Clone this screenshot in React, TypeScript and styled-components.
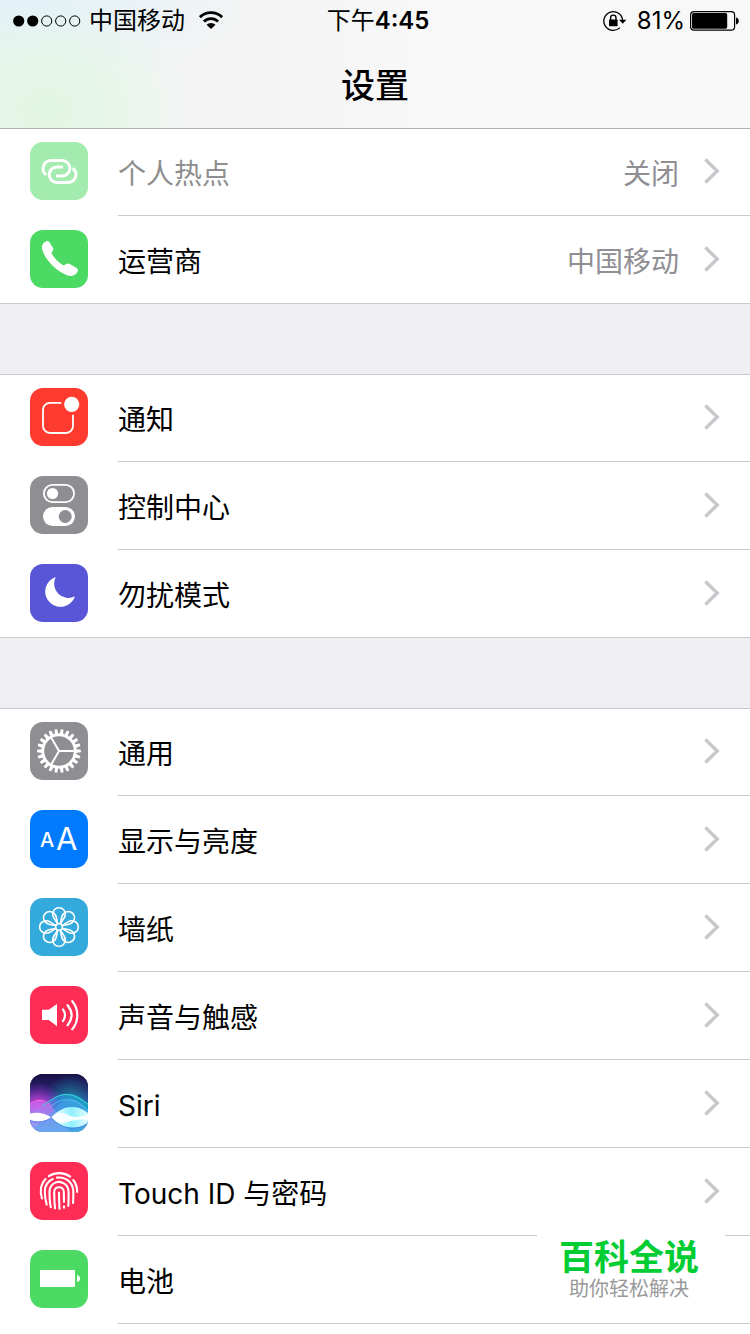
import React from "react";
import styled, { createGlobalStyle } from "styled-components";

const GlobalStyle = createGlobalStyle`
  *, *::before, *::after { box-sizing: border-box; }
  body {
    margin: 0;
    background: #efeff4;
    color: #000;
    font-family: Inter, "Noto Sans CJK SC", sans-serif;
  }
`;

const Page = styled.div`
  display: flex;
  flex-direction: column;
  min-height: 100vh;
`;

const Header = styled.header`
  position: sticky;
  top: 0;
  z-index: 1;
  background:
    radial-gradient(ellipse 150px 120px at 50px 110px, rgba(225, 247, 228, 0.9) 0%, rgba(225, 247, 228, 0.6) 40%, rgba(225, 247, 228, 0.15) 80%, rgba(225, 247, 228, 0) 100%),
    radial-gradient(ellipse 240px 90px at 20px 0, rgba(227, 241, 250, 1) 0%, rgba(227, 241, 250, 0.3) 65%, rgba(227, 241, 250, 0) 100%),
    linear-gradient(90deg, #ecf5ee 0, #f3f4f4 160px, #f4f4f4 270px, #f8f8f8 420px);
  box-shadow: 0 1px 0 #b2b2b2;
`;

const StatusBar = styled.div`
  display: grid;
  grid-template-columns: 1fr auto 1fr;
  align-items: center;
  height: 42px;
  padding: 0 11px 0 13px;
  font-size: 24px;
  line-height: 42px;
`;

const StatusSide = styled.div<{ $end?: boolean }>`
  display: flex;
  align-items: center;
  justify-content: ${(p) => (p.$end ? "flex-end" : "flex-start")};
`;

const Carrier = styled.span`
  margin: 0 14px 0 8px;
`;

const Time = styled.time`
  padding-left: 4px;

  b { font-weight: 600; }
`;

const Percent = styled.span`
  margin: 0 5px 0 10px;
`;

const Title = styled.h1`
  margin: 0;
  padding-top: 2px;
  font-size: 34px;
  line-height: 84px;
  font-weight: 500;
  text-align: center;
`;

const Main = styled.main`
  display: flex;
  flex-direction: column;
  flex: 1;
  gap: 70px;
`;

const Group = styled.ul<{ $open?: boolean }>`
  margin: 0;
  padding: 0;
  list-style: none;
  background: #fff;
  flex: ${(p) => (p.$open ? 1 : "none")};
  box-shadow: inset 0 1px 0 #c8c7cc${(p) => (p.$open ? "" : ", inset 0 -1px 0 #c8c7cc")};
`;

const RowLink = styled.a`
  display: flex;
  height: 88px;
  padding-left: 30px;
  color: inherit;
  text-decoration: none;
`;

const Tile = styled.span<{ $color: string; $faded?: boolean }>`
  flex: none;
  width: 58px;
  height: 58px;
  margin: 14px 30px 16px 0;
  border-radius: 13px;
  overflow: hidden;
  background: ${(p) => p.$color};
  opacity: ${(p) => (p.$faded ? 0.5 : 1)};

  svg { display: block; }
`;

const RowBody = styled.span`
  display: flex;
  flex: 1;
  align-items: center;
  padding: 0 30px 2px 0;
  border-bottom: 1px solid #c8c7cc;
  font-size: 28px;
  line-height: 40px;
`;

const Label = styled.span<{ $faded?: boolean }>`
  flex: 1;
  padding-top: 6px;
  color: ${(p) => (p.$faded ? "#8e8e8e" : "#000")};
`;

const Value = styled.span`
  padding-top: 6px;
  margin-right: 25px;
  color: #8e8e93;
`;

const Badge = styled.aside`
  position: fixed;
  right: 25px;
  bottom: 24px;
  z-index: 2;
  width: 188px;
  padding: 11px 4px 11px 0;
  background: #fff;
  text-align: center;
`;

const BadgeName = styled.strong`
  display: block;
  font-size: 35px;
  line-height: 44px;
  font-weight: 700;
  color: #00cc33;
`;

const BadgeLine = styled.span`
  display: block;
  font-size: 20px;
  line-height: 20px;
  color: #999;
`;

const SignalDots = () => (
  <svg width="68" height="12" viewBox="0 0 68 12" aria-hidden="true">
    {[0, 1, 2, 3, 4].map((i) => (
      <circle
        key={i}
        cx={5.7 + i * 14}
        cy={6}
        r={i < 2 ? 5.6 : 5.1}
        fill={i < 2 ? "#000" : "none"}
        stroke={i < 2 ? "none" : "#000"}
        strokeWidth={1}
      />
    ))}
  </svg>
);

const Wifi = () => (
  <svg width="24" height="20" viewBox="0 0 24 20" fill="none" stroke="#000" strokeWidth="2.8" aria-hidden="true">
    <path d="M.9 6.2a15.8 15.8 0 0 1 22.2 0" />
    <path d="M4.9 10.6a10 10 0 0 1 14.2 0" />
    <path d="M12 18 7.5 13.8a6.3 6.3 0 0 1 9 0Z" fill="#000" stroke="none" />
  </svg>
);

const RotationLock = () => (
  <svg width="24" height="22" viewBox="0 0 24 22" fill="none" stroke="#000" aria-hidden="true">
    <path d="M16.9 17.6a9.4 9.4 0 1 1 2.7-7.1" strokeWidth="1.3" />
    <path d="M16 9.8h7.4l-3.7 3.9Z" fill="#000" stroke="none" />
    <path d="M7.6 10V7.8a2.7 2.7 0 0 1 5.4 0V10" strokeWidth="1.4" />
    <rect x="6" y="9.6" width="8.6" height="6.6" rx="0.7" fill="#000" stroke="none" />
  </svg>
);

const BatteryLevel = () => (
  <svg width="49" height="20" viewBox="0 0 49 20" aria-hidden="true">
    <rect x="0.6" y="0.7" width="44" height="18.4" rx="3.4" fill="none" stroke="#000" strokeWidth="1.2" />
    <rect x="2" y="2.1" width="35.2" height="15.6" rx="1.6" />
    <path d="M46 6.4c1.8.5 2.8 1.8 2.8 3.5s-1 3-2.8 3.5Z" />
  </svg>
);

const Chevron = () => (
  <svg width="16" height="26" viewBox="0 0 16 26" fill="none" stroke="#c7c7cc" strokeWidth="3.4" aria-hidden="true">
    <path d="M1.4 1.5 13.2 13 1.4 24.5" />
  </svg>
);

const Glyph = ({ children }: { children: React.ReactNode }) => (
  <svg width="58" height="58" viewBox="0 0 58 58" fill="none" stroke="#fff" aria-hidden="true">
    {children}
  </svg>
);

const HotspotIcon = () => (
  <Glyph>
    <g strokeWidth="3">
      <path d="M16.2 32.8A8 8 0 0 1 21 18.5H32A7.8 7.8 0 0 1 32 34.1H26" />
      <path d="M42.8 26.2A8 8 0 0 1 38 40.5H27A7.8 7.8 0 0 1 27 24.9H33" />
    </g>
  </Glyph>
);

const PhoneIcon = () => (
  <Glyph>
    <path
      fill="#fff"
      stroke="none"
      d="M12.2 15.3C13.2 12.8 15.8 11 17.6 11c.8 0 1.3.4 1.7 1l3.7 6c.5.9.4 1.4 0 2.2l-1.5 3C24 28 28.8 32.7 33.5 35.6l2.8-1.6c1.2-.7 2.2-.6 3.3 0l7 4.1c1.4.9 1.7 1.7 1.1 3.1-1 2.3-3.2 4.3-5.7 4.7-2.2.3-5-.4-8-2.1C24.5 39.4 14.6 28.5 12.3 19.5c-.4-1.6-.5-2.9-.1-4.2Z"
    />
  </Glyph>
);

const NotificationIcon = () => (
  <Glyph>
    <path strokeWidth="1.8" d="M31.3 14.9H20a7 7 0 0 0-7 7V38a7 7 0 0 0 7 7h16a7 7 0 0 0 7-7V26.7" />
    <circle cx="41.7" cy="16.3" r="7.6" fill="#fff" stroke="none" />
  </Glyph>
);

const ControlIcon = () => (
  <Glyph>
    <rect x="13.9" y="8.9" width="30.2" height="17.2" rx="8.6" strokeWidth="1.8" />
    <circle cx="22.5" cy="17.5" r="5.6" fill="#fff" stroke="none" />
    <rect x="13" y="31" width="32" height="19" rx="9.5" fill="#fff" stroke="none" />
    <circle cx="35.2" cy="40.5" r="6.5" fill="#8e8e93" stroke="none" />
  </Glyph>
);

const MoonIcon = () => (
  <Glyph>
    <path fill="#fff" stroke="none" d="M25.7 13A15.3 15.3 0 1 0 45 32.3 14.3 14.3 0 0 1 25.7 13Z" />
  </Glyph>
);

const GEAR_TEETH = 22;

const GearIcon = () => (
  <Glyph>
    <g transform="translate(29 29)">
      {Array.from({ length: GEAR_TEETH }, (_, i) => (
        <path
          key={i}
          d="M16.5-1.9 21.9-1.3V1.3L16.5 1.9Z"
          fill="#fff"
          stroke="none"
          transform={`rotate(${(360 / GEAR_TEETH) * i})`}
        />
      ))}
      <circle r="16.2" strokeWidth="2.8" />
      {[0, 120, 240].map((angle) => (
        <path key={angle} d="M0 0H16" strokeWidth="2" transform={`rotate(${angle})`} />
      ))}
    </g>
  </Glyph>
);

const DisplayIcon = () => (
  <Glyph>
    <g fill="#fff" stroke="none" fontFamily="Inter, sans-serif">
      <text x="10" y="37" fontSize="20" fontWeight="500">A</text>
      <text x="26" y="40" fontSize="31" fontWeight="400">A</text>
    </g>
  </Glyph>
);

const WallpaperIcon = () => (
  <Glyph>
    <g transform="translate(29 29)" strokeWidth="1.6">
      <circle r="3.3" />
      {[0, 45, 90, 135, 180, 225, 270, 315].map((angle) => (
        <path
          key={angle}
          d="M-1.3-3.1-5.1-9C-7.8-13.2-5.4-19.3 0-19.3S7.8-13.2 5.1-9L1.3-3.1"
          transform={`rotate(${angle})`}
        />
      ))}
    </g>
  </Glyph>
);

const SoundIcon = () => (
  <Glyph>
    <path fill="#fff" stroke="none" d="M12 23.7h6.7L27 18v22.3L18.7 34H12Z" />
    <g strokeWidth="2.2" strokeLinecap="round">
      <path d="M33 23.4q4 5.7 0 11.6" />
      <path d="M37.6 19.2c5.2 6.5 5.2 13.5 0 20" />
      <path d="M42.3 15.2c6.7 8 6.7 20 0 28" />
    </g>
  </Glyph>
);

const SiriIcon = () => (
  <Glyph>
    <defs>
      <linearGradient id="siriSky" x1="0" y1="0" x2="0" y2="1">
        <stop offset="0" stopColor="#1a0f45" />
        <stop offset="0.3" stopColor="#24256a" />
        <stop offset="0.6" stopColor="#3c64c8" />
        <stop offset="1" stopColor="#86a8f0" />
      </linearGradient>
      <radialGradient id="siriPink" cx="0.15" cy="0.56" r="0.42">
        <stop offset="0" stopColor="#f23fd6" />
        <stop offset="1" stopColor="#a02be0" stopOpacity="0" />
      </radialGradient>
      <radialGradient id="siriTeal" cx="0.7" cy="0.45" r="0.45">
        <stop offset="0" stopColor="#18b3b8" stopOpacity="0.65" />
        <stop offset="1" stopColor="#18a0b8" stopOpacity="0" />
      </radialGradient>
      <linearGradient id="siriWave" x1="0" y1="0" x2="1" y2="0">
        <stop offset="0" stopColor="#b06cf0" />
        <stop offset="0.5" stopColor="#2f8fe0" />
        <stop offset="1" stopColor="#10b5c8" />
      </linearGradient>
      <linearGradient id="siriHaze" x1="0" y1="0" x2="0" y2="1">
        <stop offset="0" stopColor="#c864ee" />
        <stop offset="1" stopColor="#86b4f6" />
      </linearGradient>
      <linearGradient id="siriLens" x1="0" y1="0" x2="1" y2="0">
        <stop offset="0" stopColor="#fff" />
        <stop offset="0.55" stopColor="#8ff0ff" />
        <stop offset="1" stopColor="#e4fdff" />
      </linearGradient>
    </defs>
    <g stroke="none">
      <rect width="58" height="58" fill="url(#siriSky)" />
      <rect width="58" height="58" fill="url(#siriTeal)" />
      <rect width="58" height="58" fill="url(#siriPink)" />
      <path d="M0 39C12 36 22 20 36 20s17 6 22 10v28H0Z" fill="url(#siriWave)" opacity="0.7" />
      <path d="M0 30c8-5 16-4 22 3s12 17 18 25H0Z" fill="url(#siriHaze)" opacity="0.75" />
      <path d="M58 36C48 24 38 22 30 29S14 50 0 55v3h58Z" fill="#4fa6ee" opacity="0.5" />
      <path d="M21 43.5C28 36 35 33 42 33s12 3 16 6v10c-5 4-10 5-16 5-8 0-15-4-21-10.5Z" fill="url(#siriLens)" />
      <path d="M0 39.5c8-2 15 0 21.5 4C15 48 8 49 0 46.5Z" fill="#fff" />
      <path d="M21.500 43.500C28 38 32 38 38 41s12 2 20 0v5c-8-1-14 0-20 2s-10 1-16.500-4.500Z" fill="#fff" opacity="0.9" />
    </g>
    <path d="M0 29.5c8-5 16-4 22 3" stroke="#ff6fe6" strokeWidth="1" />
    <path d="M12 32C20 27 27 20.5 36 20.5S50 25 58 30" stroke="#38d8d8" strokeWidth="1" />
    <path d="M20 34c8-10 24-13 38 3" stroke="#5cc8f8" strokeWidth="0.8" />
    <path d="M21 43.5c6 6.5 13 10.500 21 10.500s12-2 16-5" stroke="#3a7be0" strokeWidth="0.9" />
    <path d="M0 46.5c8 2.5 15 1.5 21.500-3" stroke="#4c7be8" strokeWidth="0.9" />
  </Glyph>
);

const TouchIdIcon = () => (
  <Glyph>
    <g strokeWidth="2.1" strokeLinecap="round">
      <path d="M18.8 14.2a19 19 0 0 1 21.4.4" />
      <path d="M15.5 17C10.5 22 9.9 29.5 12 36.5" />
      <path d="M43.3 18C46 21.5 47.2 25.5 47.2 30" />
      <path d="M16.7 42.6C15.2 37.5 14.8 33 14.8 29.5c0-6 3.4-10.5 8-12.5M27 15.6c9-1.2 16.3 5.2 16.3 14 0 4.5.2 7.500-.3 11.400" />
      <path d="M20.8 45.2C19.7 40.500 19.500 35 19.500 30c0-8 7-11.500 12.500-9.500 4.200 1.500 6.600 5.200 6.600 9.500 0 5 .1 9.500-.3 14" />
      <path d="M25 46.4C24.4 41 24.2 36 24.2 30c0-6.400 9.600-6.400 9.600 0 0 4 .2 7 .2 10M34 44.400v1.400" />
      <path d="M29 30.5c0 6 .2 11 .5 16.300" />
    </g>
  </Glyph>
);

const BatteryIcon = () => (
  <Glyph>
    <g fill="#fff" stroke="none">
      <rect x="10" y="20" width="35" height="17" rx="1" />
      <path d="M47 25c2 .3 3 1.7 3 3.5S49 31.7 47 32Z" />
    </g>
  </Glyph>
);

interface Item {
  label: string;
  color: string;
  icon: React.ReactNode;
  value?: string;
  faded?: boolean;
}

const groups: Item[][] = [
  [
    { label: "个人热点", color: "#4cd964", icon: <HotspotIcon />, value: "关闭", faded: true },
    { label: "运营商", color: "#4cd964", icon: <PhoneIcon />, value: "中国移动" },
  ],
  [
    { label: "通知", color: "#ff3b30", icon: <NotificationIcon /> },
    { label: "控制中心", color: "#8e8e93", icon: <ControlIcon /> },
    { label: "勿扰模式", color: "#5856d6", icon: <MoonIcon /> },
  ],
  [
    { label: "通用", color: "#8e8e93", icon: <GearIcon /> },
    { label: "显示与亮度", color: "#007aff", icon: <DisplayIcon /> },
    { label: "墙纸", color: "#34aadc", icon: <WallpaperIcon /> },
    { label: "声音与触感", color: "#ff2d55", icon: <SoundIcon /> },
    { label: "Siri", color: "#1a0f45", icon: <SiriIcon /> },
    { label: "Touch ID 与密码", color: "#ff2d55", icon: <TouchIdIcon /> },
    { label: "电池", color: "#4cd964", icon: <BatteryIcon /> },
  ],
];

const Row = ({ item }: { item: Item }) => (
  <li>
    <RowLink href="#">
      <Tile $color={item.color} $faded={item.faded}>
        {item.icon}
      </Tile>
      <RowBody>
        <Label $faded={item.faded}>{item.label}</Label>
        {item.value && <Value>{item.value}</Value>}
        <Chevron />
      </RowBody>
    </RowLink>
  </li>
);

export default function App() {
  return (
    <Page lang="zh-CN">
      <GlobalStyle />
      <Header>
        <StatusBar>
          <StatusSide>
            <SignalDots />
            <Carrier>中国移动</Carrier>
            <Wifi />
          </StatusSide>
          <Time>
            下午<b>4:45</b>
          </Time>
          <StatusSide $end>
            <RotationLock />
            <Percent>81%</Percent>
            <BatteryLevel />
          </StatusSide>
        </StatusBar>
        <Title>设置</Title>
      </Header>
      <Main>
        {groups.map((items, i) => (
          <Group key={i} $open={i === groups.length - 1}>
            {items.map((item) => (
              <Row key={item.label} item={item} />
            ))}
          </Group>
        ))}
      </Main>
      <Badge>
        <BadgeName>百科全说</BadgeName>
        <BadgeLine>助你轻松解决</BadgeLine>
      </Badge>
    </Page>
  );
}
